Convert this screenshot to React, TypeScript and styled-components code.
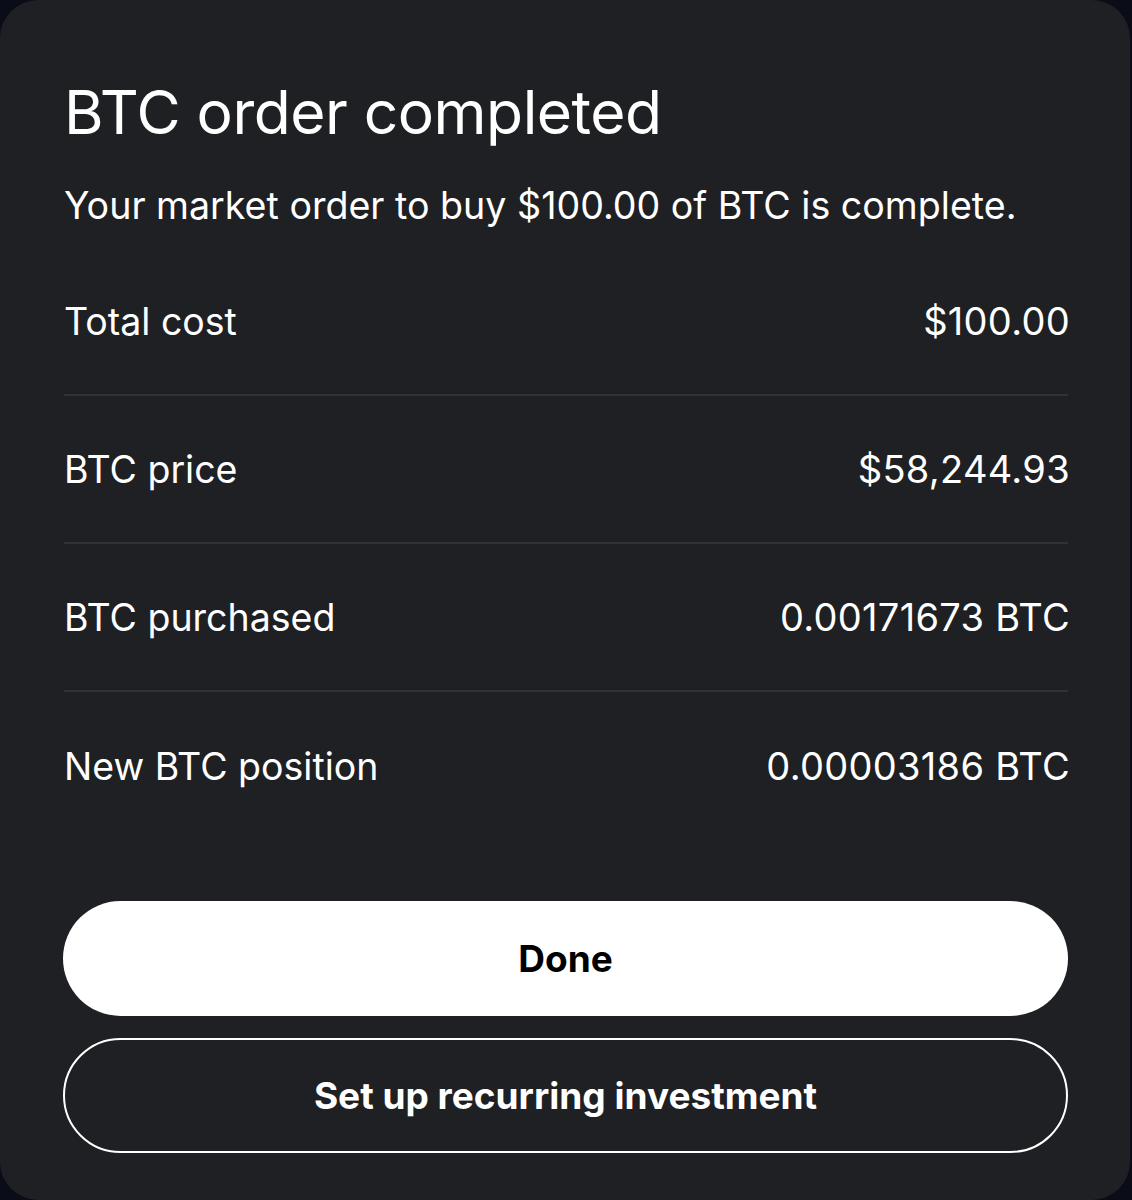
import styled, { createGlobalStyle } from "styled-components";

const GlobalStyle = createGlobalStyle`
    html, body {
        margin: 0;
        padding: 0;
        background: #0a0d18;
    }
    body {
        font-family: Inter, "Noto Sans", sans-serif;
        -webkit-font-smoothing: antialiased;
    }
`;

const rows = [
    { label: "Total cost", value: "$100.00" },
    { label: "BTC price", value: "$58,244.93" },
    { label: "BTC purchased", value: "0.00171673 BTC" },
    { label: "New BTC position", value: "0.00003186 BTC" },
];

export default function App() {
    return (
        <>
            <GlobalStyle />
            <Card>
                <Title>BTC order completed</Title>
                <Subtitle>
                    Your market order to buy $100.00 of BTC is complete.
                </Subtitle>
                <Details>
                    {rows.map((row) => (
                        <Row key={row.label}>
                            <span>{row.label}</span>
                            <Value>{row.value}</Value>
                        </Row>
                    ))}
                </Details>
                <Actions>
                    <Button $primary>Done</Button>
                    <Button>Set up recurring investment</Button>
                </Actions>
            </Card>
        </>
    );
}

const Card = styled.div`
    box-sizing: border-box;
    width: 1130px;
    height: 1200px;
    background: #1e2023;
    border-radius: 38px;
    padding: 76px 62px 0 64px;
    color: #ffffff;
    display: flex;
    flex-direction: column;
`;

const Title = styled.h1`
    margin: 0;
    font-size: 60.5px;
    font-weight: 400;
    line-height: 72px;
    letter-spacing: -0.5px;
`;

const Subtitle = styled.p`
    margin: 36px 0 0 0;
    font-size: 37.6px;
    line-height: 44px;
    font-weight: 400;
`;

const Details = styled.div`
    margin-top: 20px;
    display: flex;
    flex-direction: column;
`;

const Row = styled.div`
    box-sizing: border-box;
    display: flex;
    justify-content: space-between;
    align-items: center;
    height: 148px;
    font-size: 37.5px;
    border-bottom: 2px solid #2f3236;
    &:last-child {
        border-bottom: none;
    }
`;

const Value = styled.span`
    font-size: 38px;
    letter-spacing: 0.3px;
    margin-right: -2px;
`;

const Actions = styled.div`
    margin-top: 61px;
    margin-left: -1px;
    display: flex;
    flex-direction: column;
    gap: 22px;
`;

const Button = styled.button<{ $primary?: boolean }>`
    height: 115px;
    border-radius: 58px;
    font-family: Inter, "Noto Sans", sans-serif;
    font-size: 37px;
    font-weight: 700;
    cursor: pointer;
    background: ${(p) => (p.$primary ? "#ffffff" : "transparent")};
    color: ${(p) => (p.$primary ? "#000000" : "#ffffff")};
    border: ${(p) => (p.$primary ? "none" : "2px solid #ffffff")};
`;
